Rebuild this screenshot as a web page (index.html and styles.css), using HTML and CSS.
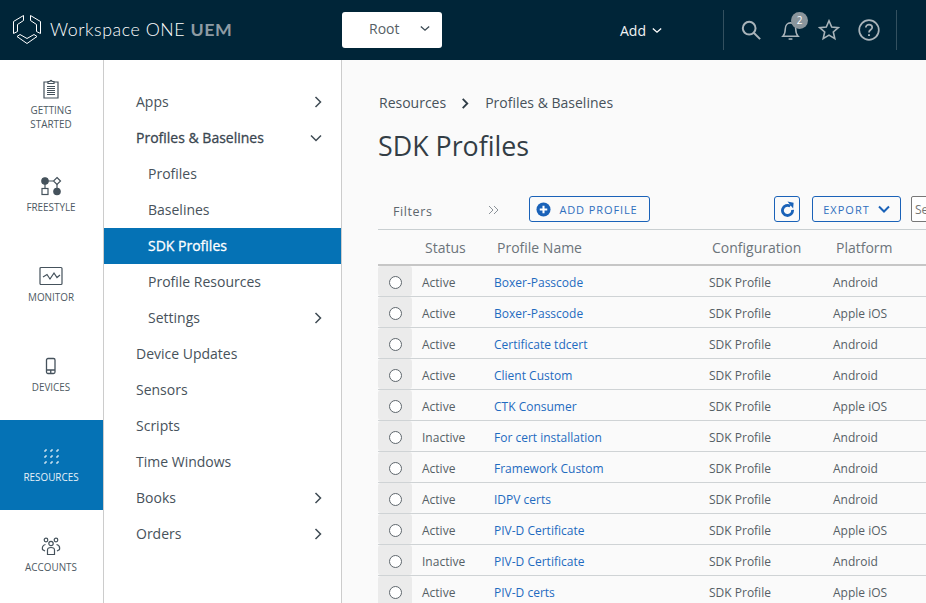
FILE: index.html
```html
<!DOCTYPE html>
<html lang="en">
<head>
    <meta charset="UTF-8">
    <title>SDK Profiles</title>
    <link rel="stylesheet" href="styles.css">
</head>
<body>

    <header class="topbar">
        <div class="brand">
            <svg class="brand-logo" viewBox="0 0 28 30" width="28" height="30" fill="none" stroke="#fff" stroke-width="1">
                <path d="M10.5 .5 L.5 6.5 V18.5 L4.5 16.5 V9.5 L10.5 5.5 Z"/>
                <path d="M17.5 .5 L27.5 6.5 V18.5 L23.5 16.5 V9.5 L17.5 5.5 Z"/>
                <path d="M4 21.5 L7 19.5 L14 23.5 L21 19.5 L24 21.5 L14 28.5 Z"/>
            </svg>
            <span class="brand-name">Workspace ONE <b>UEM</b></span>
        </div>
        <button class="org-select">Root
            <svg viewBox="0 0 12 8" width="10" height="7" fill="none" stroke="#3c4a54" stroke-width="1.6"><path d="M1 1.5 L6 6 L11 1.5"/></svg>
        </button>
        <div class="add-menu">Add
            <svg viewBox="0 0 12 8" width="10" height="7" fill="none" stroke="#fff" stroke-width="1.6"><path d="M1 1.5 L6 6 L11 1.5"/></svg>
        </div>
        <div class="top-icons">
            <svg viewBox="0 0 22 22" width="20" height="20" fill="none" stroke="#a9b4ba" stroke-width="2.2"><circle cx="9" cy="9" r="7"/><path d="M14 14 L21 21"/></svg>
            <span class="bell">
                <svg viewBox="0 0 20 22" width="19" height="22" fill="none" stroke="#a9b4ba" stroke-width="1.6"><path d="M2 17.5 C4 15.5 4.5 14 4.5 10 C4.5 6 7 3.5 10 3.5 C13 3.5 15.5 6 15.5 10 C15.5 14 16 15.5 18 17.5 Z"/><path d="M8 20.5 H12"/></svg>
                <span class="badge">2</span>
            </span>
            <svg viewBox="0 0 22 22" width="22" height="22" fill="none" stroke="#a9b4ba" stroke-width="1.6"><path d="M11 1.8 L13.7 8 L20.3 8.6 L15.3 13 L16.8 19.6 L11 16.1 L5.2 19.6 L6.7 13 L1.7 8.6 L8.3 8 Z"/></svg>
            <svg viewBox="0 0 22 22" width="22" height="22" fill="none" stroke="#a9b4ba" stroke-width="1.7"><circle cx="11" cy="11" r="9.8"/><path d="M7.8 8.6 C7.8 4.6 14.2 4.8 14.2 8.4 C14.2 10.8 11 10.8 11 13.4"/><path d="M11 15.2 V17" stroke-width="2"/></svg>
        </div>
    </header>

    <div class="layout">
        <nav class="rail">
            <a class="rail-item">
                <svg viewBox="0 0 18 20" width="18" height="20" fill="none" stroke="#45525c" stroke-width="1.2"><path d="M6 3 H2 V19 H16 V3 H12"/><path d="M6 4.5 V2.5 H8 C8 1 10 1 10 2.5 H12 V4.5 Z"/><path d="M5 7.5 H13 M5 9.5 H13 M5 11.5 H13 M5 13.5 H13 M5 15.5 H13"/></svg>
                <span>GETTING<br>STARTED</span>
            </a>
            <a class="rail-item">
                <svg viewBox="0 0 22 20" width="22" height="20" fill="#45525c" stroke="#45525c" stroke-width="1.2"><circle cx="5" cy="5" r="3.2"/><path d="M8 5 H13 M5 8 V12 M17 8 V12" fill="none"/><path d="M17 1.5 L20.5 5 L17 8.5 L13.5 5 Z" fill="#fff"/><rect x="2" y="12.5" width="6" height="6" fill="#fff"/><circle cx="17" cy="15.5" r="3.2"/></svg>
                <span>FREESTYLE</span>
            </a>
            <a class="rail-item">
                <svg viewBox="0 0 24 20" width="24" height="20" fill="none" stroke="#45525c" stroke-width="1.2"><rect x="1" y="1.5" width="22" height="17" rx="1"/><path d="M4 11 L8 8.5 L11 13 L15 7 L18 11.5 L21 9"/></svg>
                <span>MONITOR</span>
            </a>
            <a class="rail-item">
                <svg viewBox="0 0 12 20" width="12" height="20" fill="none" stroke="#45525c" stroke-width="1.3"><rect x="1.5" y="2.5" width="8.5" height="15" rx="1.5"/><path d="M1.5 14 H10 M5.75 14 V17.5"/></svg>
                <span>DEVICES</span>
            </a>
            <a class="rail-item is-active">
                <svg viewBox="0 0 16 16" width="16" height="16" fill="none" stroke="#fff" stroke-width="1"><path d="M1 3 H3 V1 M7 3 H9 V1 M13 3 H15 V1 M1 9 H3 V7 M7 9 H9 V7 M13 9 H15 V7 M1 15 H3 V13 M7 15 H9 V13 M13 15 H15 V13"/></svg>
                <span>RESOURCES</span>
            </a>
            <a class="rail-item">
                <svg viewBox="0 0 20 18" width="20" height="18" fill="none" stroke="#45525c" stroke-width="1.2"><circle cx="10" cy="6.5" r="2.2"/><path d="M6.5 17.5 V13 C6.5 11 8 10.5 10 10.5 C12 10.5 13.5 11 13.5 13 V17.5 Z"/><circle cx="5" cy="3" r="1.8"/><circle cx="15" cy="3" r="1.8"/><path d="M4 14 L1.5 12.5 C1 10 2 8 4.5 7.5 M16 14 L18.5 12.5 C19 10 18 8 15.5 7.5"/></svg>
                <span>ACCOUNTS</span>
            </a>
        </nav>

        <nav class="side">
            <a class="side-item">Apps <svg class="chev" viewBox="0 0 8 12" width="8" height="12"><path d="M1.5 1 L6.5 6 L1.5 11"/></svg></a>
            <a class="side-item is-open">Profiles &amp; Baselines <svg class="chev" viewBox="0 0 12 8" width="12" height="8"><path d="M1 1.5 L6 6.5 L11 1.5"/></svg></a>
            <a class="side-item sub">Profiles</a>
            <a class="side-item sub">Baselines</a>
            <a class="side-item sub is-active">SDK Profiles</a>
            <a class="side-item sub">Profile Resources</a>
            <a class="side-item sub">Settings <svg class="chev" viewBox="0 0 8 12" width="8" height="12"><path d="M1.5 1 L6.5 6 L1.5 11"/></svg></a>
            <a class="side-item">Device Updates</a>
            <a class="side-item">Sensors</a>
            <a class="side-item">Scripts</a>
            <a class="side-item">Time Windows</a>
            <a class="side-item">Books <svg class="chev" viewBox="0 0 8 12" width="8" height="12"><path d="M1.5 1 L6.5 6 L1.5 11"/></svg></a>
            <a class="side-item">Orders <svg class="chev" viewBox="0 0 8 12" width="8" height="12"><path d="M1.5 1 L6.5 6 L1.5 11"/></svg></a>
        </nav>

        <main class="content">
            <div class="crumbs">
                <span>Resources</span>
                <svg viewBox="0 0 8 12" width="8" height="11" fill="none" stroke="#2f3c46" stroke-width="2"><path d="M1.5 1 L6.5 6 L1.5 11"/></svg>
                <span>Profiles &amp; Baselines</span>
            </div>
            <h1>SDK Profiles</h1>

            <div class="toolbar">
                <span class="filters">Filters</span>
                <svg class="dbl" viewBox="0 0 11 10" width="11" height="10" fill="none" stroke="#8b9298" stroke-width="1"><path d="M1 1 L5 5 L1 9 M6 1 L10 5 L6 9"/></svg>
                <button class="btn add-btn">
                    <svg viewBox="0 0 16 16" width="15" height="15"><circle cx="8" cy="8" r="7.5" fill="#1a62b8"/><path d="M8 4 V12 M4 8 H12" stroke="#fff" stroke-width="2.2"/></svg>
                    ADD PROFILE
                </button>
                <button class="btn refresh-btn">
                    <svg viewBox="0 0 16 16" width="15" height="16" fill="none" stroke="#1a62b8" stroke-width="3"><path d="M11 5 A5.4 5.4 0 1 0 13.4 9"/><path d="M8 0 L14.5 1.2 L14 7.5 Z" fill="#1a62b8" stroke="none"/></svg>
                </button>
                <button class="btn export-btn">EXPORT
                    <svg viewBox="0 0 12 8" width="12" height="8" fill="none" stroke="#1a62b8" stroke-width="2"><path d="M1 1.5 L6 6.5 L11 1.5"/></svg>
                </button>
                <input class="search" type="text" placeholder="Search">
            </div>

            <table class="grid">
                <colgroup>
                    <col class="c-radio"><col class="c-status"><col class="c-name"><col class="c-config"><col class="c-platform">
                </colgroup>
                <thead>
                    <tr><th></th><th>Status</th><th>Profile Name</th><th>Configuration</th><th>Platform</th></tr>
                </thead>
                <tbody>
                    <tr><td class="pick"><div class="pick-box"><i></i></div></td><td>Active</td><td><a>Boxer-Passcode</a></td><td>SDK Profile</td><td>Android</td></tr>
                    <tr><td class="pick"><div class="pick-box"><i></i></div></td><td>Active</td><td><a>Boxer-Passcode</a></td><td>SDK Profile</td><td>Apple iOS</td></tr>
                    <tr><td class="pick"><div class="pick-box"><i></i></div></td><td>Active</td><td><a>Certificate tdcert</a></td><td>SDK Profile</td><td>Android</td></tr>
                    <tr><td class="pick"><div class="pick-box"><i></i></div></td><td>Active</td><td><a>Client Custom</a></td><td>SDK Profile</td><td>Android</td></tr>
                    <tr><td class="pick"><div class="pick-box"><i></i></div></td><td>Active</td><td><a>CTK Consumer</a></td><td>SDK Profile</td><td>Apple iOS</td></tr>
                    <tr><td class="pick"><div class="pick-box"><i></i></div></td><td>Inactive</td><td><a>For cert installation</a></td><td>SDK Profile</td><td>Android</td></tr>
                    <tr><td class="pick"><div class="pick-box"><i></i></div></td><td>Active</td><td><a>Framework Custom</a></td><td>SDK Profile</td><td>Android</td></tr>
                    <tr><td class="pick"><div class="pick-box"><i></i></div></td><td>Active</td><td><a>IDPV certs</a></td><td>SDK Profile</td><td>Android</td></tr>
                    <tr><td class="pick"><div class="pick-box"><i></i></div></td><td>Active</td><td><a>PIV-D Certificate</a></td><td>SDK Profile</td><td>Apple iOS</td></tr>
                    <tr><td class="pick"><div class="pick-box"><i></i></div></td><td>Inactive</td><td><a>PIV-D Certificate</a></td><td>SDK Profile</td><td>Android</td></tr>
                    <tr><td class="pick"><div class="pick-box"><i></i></div></td><td>Active</td><td><a>PIV-D certs</a></td><td>SDK Profile</td><td>Apple iOS</td></tr>
                </tbody>
            </table>
        </main>
    </div>

</body>
</html>
```

FILE: styles.css
```css
html, body {
    height: 100%;
}

body {
    margin: 0;
    overflow: hidden;
    font-family: 'Open Sans', 'Noto Sans', sans-serif;
    color: #45525c;
    background-color: #fff;
}

/* top bar */
.topbar {
    display: flex;
    align-items: center;
    height: 60px;
    background-color: #002538;
}

.brand {
    display: flex;
    align-items: center;
    gap: 9px;
    width: 342px;
    padding-left: 13px;
    box-sizing: border-box;
}

.brand-name {
    margin-top: -2px;
    font-family: 'Lato', sans-serif;
    font-size: 17.8px;
    font-weight: 300;
    letter-spacing: 0.55px;
    color: #fff;
    white-space: nowrap;
}

.brand-name b {
    font-weight: 700;
    color: #8e9ba3;
}

.org-select {
    display: flex;
    align-items: center;
    justify-content: space-between;
    width: 100px;
    height: 36px;
    padding: 0 12px 3px 27px;
    border: 0;
    border-radius: 3px;
    background-color: #fff;
    color: #565f66;
    font: 14px 'Open Sans', sans-serif;
}

.add-menu {
    display: flex;
    align-items: center;
    gap: 6px;
    margin-left: 178px;
    width: 103px;
    color: #f2f4f5;
    font-size: 14px;
}

.top-icons {
    display: flex;
    align-items: center;
    gap: 18px;
    height: 40px;
    padding: 0 16px 0 17px;
    border-left: 1px solid #33505f;
    border-right: 1px solid #33505f;
}

.bell {
    position: relative;
    display: flex;
    margin-left: 2px;
}

.badge {
    position: absolute;
    top: -7px;
    left: 10px;
    width: 17px;
    height: 17px;
    border-radius: 50%;
    background-color: #8a959c;
    color: #fff;
    font-size: 10px;
    line-height: 17px;
    text-align: center;
}

/* columns */
.layout {
    display: flex;
    height: 543px;
}

.rail {
    flex: none;
    width: 103px;
    border-right: 1px solid #cccccc;
}

.rail-item {
    display: flex;
    flex-direction: column;
    align-items: center;
    justify-content: center;
    height: 90px;
    padding-right: 1px;
    box-sizing: border-box;
    color: #4d5962;
    font-size: 9.9px;
    line-height: 14px;
    text-align: center;
}

.rail-item svg {
    height: 20px;
    margin-bottom: 4px;
}

.rail-item.is-active {
    background-color: #0572b5;
    color: #e6f1f8;
}

.side {
    flex: none;
    width: 237px;
    padding-top: 24px;
    border-right: 1px solid #cccccc;
}

.side-item {
    display: flex;
    align-items: center;
    justify-content: space-between;
    height: 36px;
    padding: 0 19px 1px 32px;
    box-sizing: border-box;
    color: #47525b;
    font-size: 14px;
}

.side-item.sub {
    padding-left: 44px;
}

.side-item.is-open {
    color: #3a4650;
    -webkit-text-stroke: 0.3px #3a4650;
}

.side-item.is-active {
    background-color: #0572b5;
    color: #fff;
    -webkit-text-stroke: 0.3px #fff;
}

.chev {
    fill: none;
    stroke: #3f4b54;
    stroke-width: 1.5;
}

/* main area */
.content {
    flex: 1;
    min-width: 0;
    overflow: hidden;
    padding-left: 36px;
    background-color: #fafafa;
}

.crumbs {
    display: flex;
    align-items: center;
    gap: 15px;
    margin: 33px 0 0 1px;
    color: #47525b;
    font-size: 14px;
    line-height: 20px;
}

.crumbs svg {
    margin-right: 1px;
}

h1 {
    margin: 13px 0 0;
    color: #333d45;
    font-size: 26.8px;
    font-weight: 400;
    line-height: 40px;
}

.toolbar {
    display: flex;
    align-items: flex-start;
    height: 33px;
    margin-top: 30px;
    white-space: nowrap;
}

.toolbar > * {
    flex: none;
}

.filters {
    width: 110px;
    padding-left: 15px;
    box-sizing: border-box;
    color: #5d666d;
    font-size: 12.5px;
    letter-spacing: 0.6px;
    line-height: 32px;
}

.dbl {
    margin: 9px 30px 0 0;
}

.btn {
    display: flex;
    align-items: center;
    justify-content: center;
    height: 26px;
    padding: 0;
    border: 1px solid #1a62b8;
    border-radius: 3px;
    background-color: transparent;
    color: #2f6fbe;
    font: 11px 'Open Sans', sans-serif;
    letter-spacing: 1px;
}

.add-btn {
    gap: 8px;
    width: 121px;
    margin-right: 124px;
    padding-right: 5px;
    box-sizing: border-box;
    letter-spacing: 0.9px;
}

.refresh-btn {
    width: 26px;
    margin-right: 12px;
}

.export-btn {
    gap: 8px;
    width: 89px;
    margin-right: 10px;
}

.search {
    width: 70px;
    height: 26px;
    padding: 0 3px;
    border: 1px solid #777;
    box-sizing: border-box;
    border-radius: 2px;
    font: 12px 'Open Sans', sans-serif;
}

.grid {
    table-layout: fixed;
    width: 630px;
    border-collapse: collapse;
    border-top: 1px solid #c9cfd1;
}

.c-radio { width: 34px; }
.c-status { width: 72px; }
.c-name { width: 215px; }
.c-config { width: 124px; }
.c-platform { width: 185px; }

.grid th {
    height: 34px;
    padding: 0 0 0 13px;
    border-bottom: 2px solid #c6c6c6;
    color: #6c747a;
    font-size: 14px;
    font-weight: 400;
    text-align: left;
}

.grid td {
    height: 27px;
    padding: 3px 0 0 10px;
    border-bottom: 1px solid #cfd3d5;
    color: #565f66;
    font-size: 12px;
}

.grid td a {
    color: #1f6bc0;
}

.grid td.pick {
    padding: 0;
}

.pick-box {
    display: flex;
    align-items: center;
    justify-content: center;
    height: 30px;
    padding-top: 2px;
    box-sizing: border-box;
    border-radius: 3px;
    background-color: #ebebeb;
}

.pick i {
    width: 11px;
    height: 11px;
    border: 1px solid #5f676d;
    border-radius: 50%;
    background-color: #fff;
}
```
